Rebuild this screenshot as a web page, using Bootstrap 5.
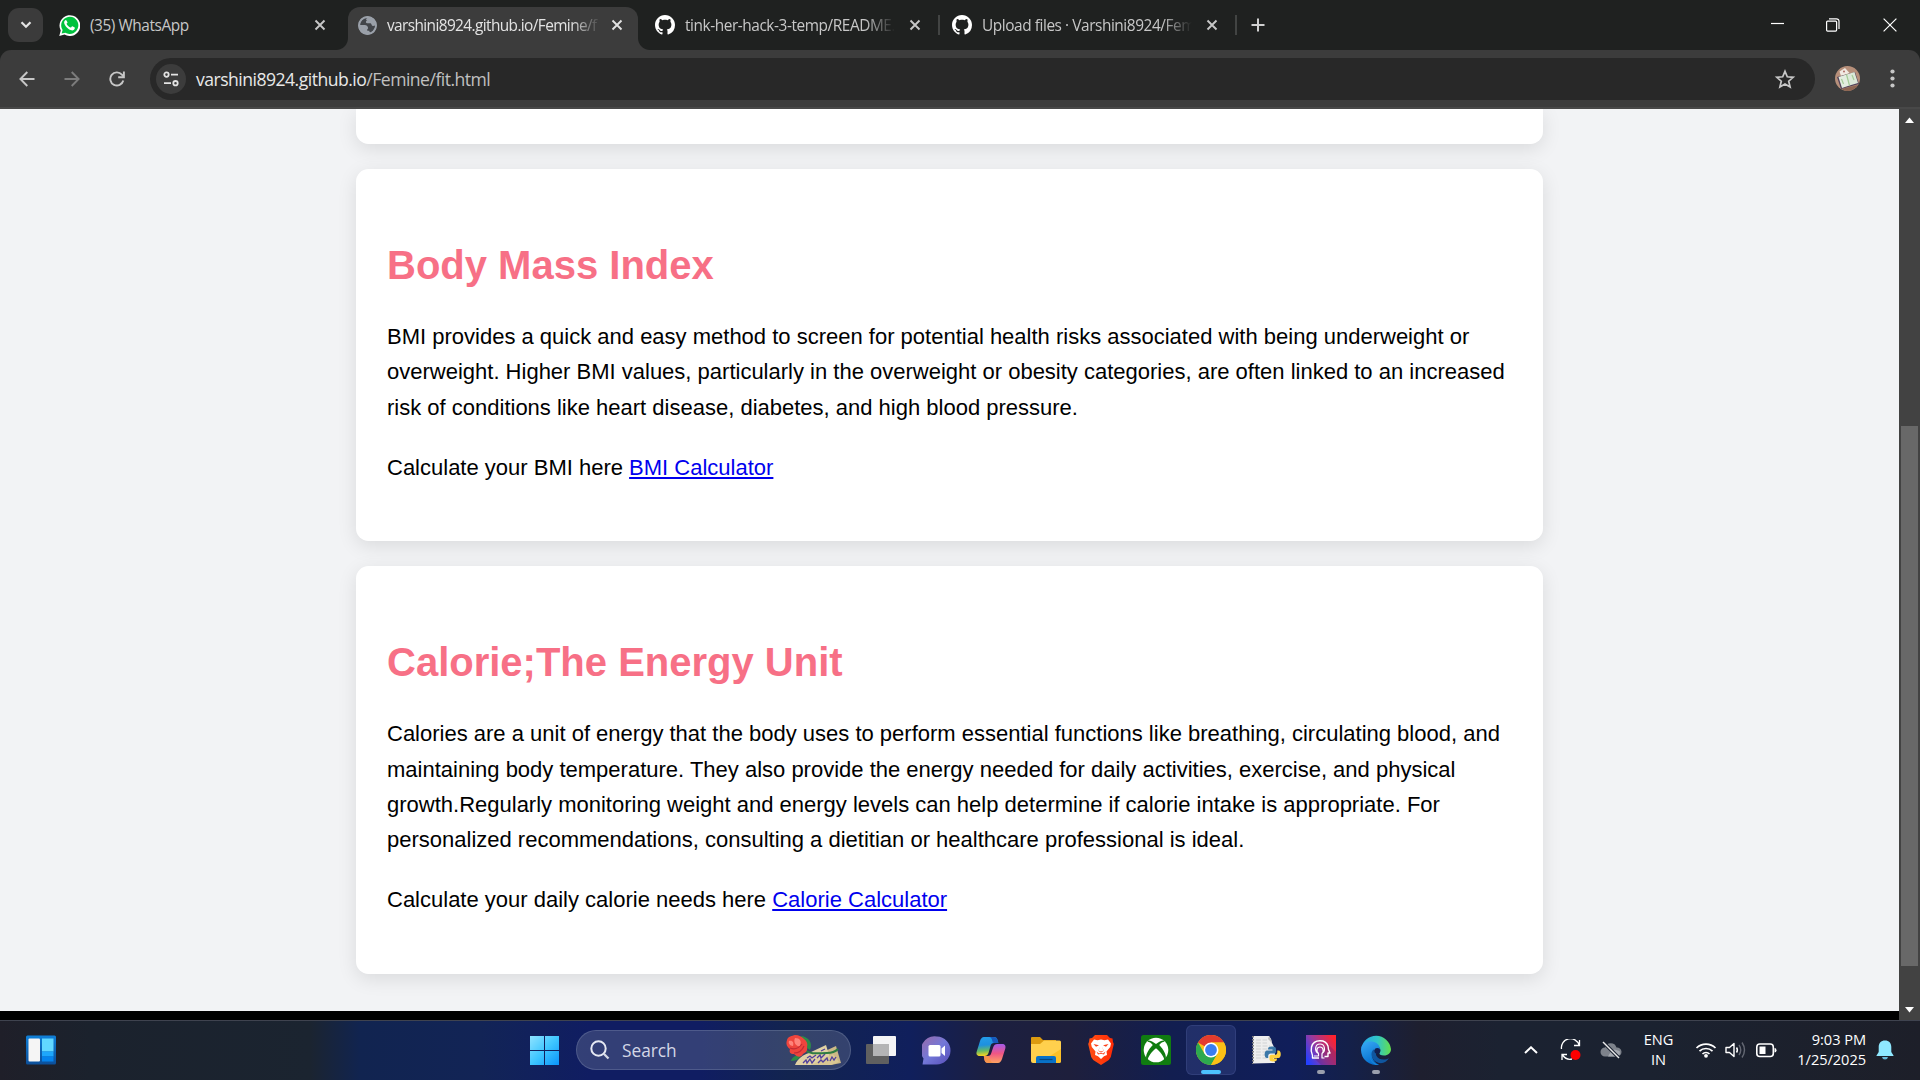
<!DOCTYPE html>
<html lang="en">
<head>
<meta charset="utf-8">
<meta name="viewport" content="width=device-width, initial-scale=1">
<title>varshini8924.github.io/Femine/fit.html</title>
<link href="https://cdn.jsdelivr.net/npm/bootstrap@5.3.0/dist/css/bootstrap.min.css" rel="stylesheet">
<style>
  html, body { height: 1080px; overflow: hidden; }
  body { font-family: "Open Sans", "Noto Sans", sans-serif; background: #000; color: #000; }
  svg { display: block; flex: none; }
  .screen { width: 1920px; height: 1080px; }

  /* tab strip */
  .browser-top { background: #1f2120; }
  .tabstrip { height: 50px; color: #c7c7c7; font-size: 15.4px; }
  .tabsearch { width: 35px; height: 34px; margin: 8px 4px 8px 8px; border-radius: 11px; background: #3b3b3b; }
  .tab { height: 43px; margin-top: 7px; padding: 0 11px 7px 10px; }
  .tab-a { width: 294px; padding-left: 12px; margin-right: 7px; }
  .tab-on { width: 290px; background: #3c3c3c; color: #e3e3e3; border-radius: 12px 12px 0 0; position: relative; }
  .tab-on::before, .tab-on::after { content: ""; position: absolute; bottom: 0; width: 12px; height: 12px; }
  .tab-on::before { left: -12px; background: radial-gradient(circle at 0 0, transparent 11.5px, #3c3c3c 12.5px); }
  .tab-on::after { right: -12px; background: radial-gradient(circle at 100% 0, transparent 11.5px, #3c3c3c 12.5px); }
  .tab-title { flex: 1 1 0; min-width: 0; white-space: nowrap; margin: 1px 10px 0; letter-spacing: -.43px; line-height: 22px; }
  .fade-end { -webkit-mask-image: linear-gradient(90deg, #000 calc(100% - 30px), transparent); mask-image: linear-gradient(90deg, #000 calc(100% - 30px), transparent); }
  .tab-on .tab-title { letter-spacing: -.6px; }
  .tab-sep { width: 2px; height: 20px; background: #424443; }
  .tab-c { width: 285px; margin-left: 17px; padding-left: 0; padding-right: 0; }
  .tab-d { width: 285px; margin-left: 12px; margin-right: 14px; padding-left: 0; padding-right: 0; }
  .tab-c svg + .ms-3, .tab-d svg + .ms-3 { padding-left: 1px; }
  .winctl { width: 57px; }

  /* toolbar */
  .toolbar { height: 59px; background: #3c3c3c; border-bottom: 2px solid #484848; border-radius: 11px 11px 0 0; }
  .navbtn { width: 45px; }
  .omnibox { width: 1665px; height: 42px; border-radius: 21px; background: #282828; color: #e8e8e8; font-size: 17.6px; padding-left: 6px; margin-left: 11px; }
  .siteinfo { width: 30px; height: 30px; border-radius: 50%; background: #3c3c3c; }
  .url { letter-spacing: -.52px; margin-left: 10px; line-height: 24px; }
  .url-path { color: #c0c0c0; }

  /* web page */
  .viewport-row { height: 911px; }
  .webpage { width: 1899px; height: 902px; background: #f2f3f5; overflow: hidden; font-family: "Liberation Sans", Arial, sans-serif; }
  .panel { width: 1187px; margin: 0 auto 25px; padding: 31px; background: #fff; border-radius: 12.5px; box-shadow: 0 5px 19px rgba(0,0,0,.1); }
  .panel-cut { height: 35px; border-radius: 0 0 12.5px 12.5px; padding: 0; }
  .panel h2 { font-size: 40px; line-height: 64px; font-weight: 700; color: #f77086; margin: 33.2px 0 22px; }
  .panel p { font-size: 22px; line-height: 35.2px; margin: 0 0 25px; white-space: nowrap; }
  .panel p:last-child { margin-bottom: 25.300px; }
  .panel a { color: #00e; text-decoration: underline; }
  .scroller { width: 21px; background: #424242; padding: 7px 2px 6px; }
  .scroll-thumb { width: 17px; height: 540px; background: #686868; margin-top: 301px; }

  /* taskbar */
  .taskbar { height: 60px; border-top: 1px solid #3f434f; color: #fff; padding-bottom: 1px;
    background: linear-gradient(90deg, #1f1f29 0, #1b222d 90px, #1b2430 310px, #112450 360px, #122456 480px, #101d62 590px, #101d62 700px, #12244f 790px, #101f5c 910px, #1c1f40 990px, #1e1f3c 1070px, #121e50 1170px, #101e5a 1290px, #142049 1350px, #1e1f2f 1420px, #1b2231 1500px, #1b2230 1650px, #1d1f29 1920px); }
  .tile { width: 50px; height: 50px; border-radius: 6px; margin-right: 5px; position: relative; }
  .tile-on { background: rgba(110,130,210,.18); border: 1px solid rgba(150,165,230,.13); }
  .run-mark { position: absolute; bottom: 1px; left: 50%; transform: translateX(-50%); width: 8px; height: 4px; border-radius: 2px; background: #9a9fad; }
  .tile-on .run-mark { width: 20px; background: #4cc2ff; bottom: 0; }
  .tile-widgets { margin: 0 453px 0 16px; }
  .searchbox { width: 275px; height: 40px; border-radius: 20px; background: rgba(125,135,160,.33); border: 1px solid rgba(160,170,205,.25); font-size: 17.3px; color: #d3d7e6; margin: 0 5px 0 2px; }
  .searchbox span { padding-top: 2px; }
  .tray { font-size: 14.6px; line-height: 20px; }
  .clock, .lang { padding-bottom: 2px; letter-spacing: -.05px; }
</style>
<script src="https://cdn.jsdelivr.net/npm/bootstrap@5.3.0/dist/js/bootstrap.bundle.min.js"></script>
</head>
<body>
<svg width="0" height="0" class="position-absolute">
  <defs>
    <symbol id="x" viewBox="0 0 12 12"><path d="M1.500 1.500l9 9M10.500 1.500l-9 9" stroke="currentColor" stroke-width="1.900" fill="none"/></symbol>
    <symbol id="gh" viewBox="0 0 16 16"><path fill="#fff" d="M8 0C3.58 0 0 3.58 0 8c0 3.54 2.29 6.53 5.47 7.59.4.07.55-.17.55-.38 0-.19-.01-.82-.01-1.49-2.01.37-2.53-.49-2.69-.94-.09-.23-.48-.94-.82-1.13-.28-.15-.68-.52-.01-.53.63-.01 1.08.58 1.23.82.72 1.21 1.87.87 2.33.66.07-.52.28-.87.51-1.07-1.78-.2-3.64-.89-3.64-3.95 0-.87.31-1.59.82-2.15-.08-.2-.36-1.02.08-2.12 0 0 .67-.21 2.2.82.64-.18 1.32-.27 2-.27s1.36.09 2 .27c1.53-1.04 2.2-.82 2.2-.82.44 1.1.16 1.92.08 2.12.51.56.82 1.27.82 2.15 0 3.07-1.87 3.75-3.65 3.95.29.25.54.73.54 1.48 0 1.07-.01 1.93-.01 2.2 0 .21.15.46.55.38A8.01 8.01 0 0 0 16 8c0-4.42-3.58-8-8-8z"/></symbol>
  </defs>
</svg>

<div class="screen d-flex flex-column">

  <header class="browser-top">
  <!-- tab strip -->
  <div class="tabstrip d-flex align-items-start">
    <div class="tabsearch d-flex align-items-center justify-content-center">
      <svg width="12" height="8" viewBox="0 0 12 8"><path d="M1.500 1.200L6 5.800l4.500-4.600" fill="none" stroke="#e3e3e3" stroke-width="2.200"/></svg>
    </div>
    <div class="tab tab-a d-flex align-items-center">
      <svg width="21" height="21" viewBox="0 0 24 24"><path fill="#fff" d="M.3 24l1.700-6.200A11.900 11.900 0 1 1 6.300 22.300z"/><path fill="#00c23e" d="M3 21.200l1.100-4A9.800 9.800 0 1 1 7.200 20.200z"/><path fill="#fff" d="M8.700 6.500c-.4-.8-.9-.8-1.400-.6C5.500 7 5.600 9 6.500 10.800c1.600 3.200 4.200 5.600 7.500 6.700 1.900.5 3.900-.4 4.100-2.600 0-.6-.2-.7-.6-.9l-2.200-1.100c-.9-.3-1.200 1.500-2 1.500-2-.7-3.900-2.500-4.700-4.300 0-.6 1.300-1.100 1.100-1.900z"/></svg>
      <div class="tab-title">(35) WhatsApp</div>
      <svg width="12" height="12"><use href="#x"/></svg>
      <div class="ms-1"></div>
    </div>
    <div class="tab tab-on d-flex align-items-center">
      <svg width="19" height="19" viewBox="0 0 19 19"><circle cx="9.500" cy="9.500" r="9.200" fill="#9aa0a9"/><path d="M10.500 1.800c-3 .2-2.800 2.600-1.200 2.800-1.900.4-1.800 2.400-.3 2.700h3.500c1.500.6.600 2.400 2.500 2.600l2.300-.4c0 3-2.200 6-4.700 7-.8-.2-1.300-.9-1.200-1.800H9.500c-.7-.8-.2-1.800.6-2.300C10.200 10.500 8.600 9 6.800 9H2.200C2 5 5.500 1.500 10.500 1.800z" fill="#42454a"/><circle cx="9.500" cy="9.500" r="8.500" fill="none" stroke="#9aa0a9" stroke-width="1.800"/></svg>
      <div class="tab-title fade-end">varshini8924.github.io/Femine/f</div>
      <svg width="12" height="12"><use href="#x"/></svg>
      <div class="ms-1"></div>
    </div>
    <div class="tab tab-c d-flex align-items-center">
      <svg width="20" height="20"><use href="#gh"/></svg>
      <div class="tab-title fade-end">tink-her-hack-3-temp/README.</div>
      <svg class="ms-1" width="12" height="12"><use href="#x"/></svg>
      <div class="ms-3"></div>
      <div class="tab-sep"></div>
    </div>
    <div class="tab tab-d d-flex align-items-center">
      <svg width="20" height="20"><use href="#gh"/></svg>
      <div class="tab-title fade-end">Upload files · Varshini8924/Fem</div>
      <svg class="ms-1" width="12" height="12"><use href="#x"/></svg>
      <div class="ms-3"></div>
      <div class="tab-sep"></div>
    </div>
    <div class="d-flex align-items-center align-self-stretch">
      <svg width="14" height="14" viewBox="0 0 14 14"><path d="M7 .5v13M.5 7h13" stroke="#d0d0d0" stroke-width="2"/></svg>
    </div>
    <div class="ms-auto d-flex align-self-stretch align-items-center">
      <div class="winctl d-flex justify-content-center"><svg width="14" height="14"><path d="M0 5.500h13" stroke="#fff" stroke-width="1.200"/></svg></div>
      <div class="winctl d-flex justify-content-center pe-1"><svg width="14" height="14"><rect x=".6" y="3.100" width="10" height="10" rx="1" fill="none" stroke="#fff" stroke-width="1.200"/><path d="M3 .8h7.500a2.500 2.500 0 0 1 2.500 2.500V11" fill="none" stroke="#fff" stroke-width="1.200"/></svg></div>
      <div class="winctl d-flex justify-content-center pe-1"><svg width="14" height="14"><path d="M.6.6l12.800 12.800M13.400.6L.6 13.400" stroke="#fff" stroke-width="1.200"/></svg></div>
    </div>
  </div>

  <!-- toolbar -->
  <div class="toolbar d-flex align-items-center ps-1">
    <div class="navbtn d-flex justify-content-center"><svg width="16" height="16"><path d="M15.500 8H1.500M8.300 1L1.400 8l6.900 7" fill="none" stroke="#c7c7c7" stroke-width="1.900"/></svg></div>
    <div class="navbtn d-flex justify-content-center"><svg width="16" height="16"><path d="M.5 8h14M7.700 1l6.900 7-6.900 7" fill="none" stroke="#7c7c7c" stroke-width="1.900"/></svg></div>
    <div class="navbtn d-flex justify-content-center"><svg width="16" height="16"><path d="M14.300 9.600A6.600 6.600 0 1 1 12.900 3.600L14.600 5.500" fill="none" stroke="#c7c7c7" stroke-width="1.900"/><path d="M14.900.5v5.700H9.200" fill="none" stroke="#c7c7c7" stroke-width="1.900"/></svg></div>
    <div class="omnibox d-flex align-items-center me-auto">
      <div class="siteinfo d-flex align-items-center justify-content-center"><svg width="16" height="16" viewBox="0 0 16 16" fill="none" stroke="#e3e3e3" stroke-width="1.800"><circle cx="3.500" cy="3.600" r="2.200"/><path d="M8 3.600h7M1 12.200h7"/><circle cx="12.500" cy="12.200" r="2.200"/></svg></div>
      <div class="url">varshini8924.github.io<span class="url-path">/Femine/fit.html</span></div>
      <svg class="ms-auto me-3" width="28" height="20" viewBox="0 0 28 20"><path d="M14 1.800l2.300 5.500 5.900.5-4.500 3.900 1.400 5.800-5.100-3.100-5.100 3.100 1.400-5.800-4.500-3.900 5.900-.5z" fill="none" stroke="#c7c7c7" stroke-width="1.700" transform="translate(0 .5)"/></svg>
    </div>
    <svg width="25" height="25" viewBox="0 0 25 25" style="margin-right:30px"><clipPath id="av"><circle cx="12.500" cy="12.500" r="12.500"/></clipPath><g clip-path="url(#av)"><path fill="#b68f7a" d="M0 0h25v25H0z"/><path fill="#8d6552" d="M6 23l17-4 2 4-10 4z"/><path fill="#f1e9e2" d="M4.500 5.500L10 2l4.500 5L6 10z"/><path fill="#514159" d="M2 11l18-5 4 12-18 5z"/><path fill="#e3eddf" d="M3.500 11l8-2.500 3 11L7 22z"/><path fill="#dde9d9" d="M11.500 8.500L19.500 6l3.500 11-8.500 2.500z"/><path d="M11.500 8.500l3 11M6.500 13l2 5M17 9l2 5" stroke="#a5cc98" stroke-width="1.200"/><circle cx="9" cy="5.500" r=".9" fill="#a8605a"/></g></svg>
    <div class="pe-4 me-1"><svg width="5" height="22" viewBox="0 0 5 22" fill="#c7c7c7" style="margin-right:-3px"><circle cx="2.500" cy="3.500" r="2.100"/><circle cx="2.500" cy="10.500" r="2.100"/><circle cx="2.500" cy="17.500" r="2.100"/></svg></div>
  </div>
  </header>

  <!-- page viewport -->
  <div class="viewport-row d-flex">
    <main class="webpage">
      <section class="panel panel-cut"></section>
      <section class="panel">
        <h2>Body Mass Index</h2>
        <p>BMI provides a quick and easy method to screen for potential health risks associated with being underweight or<br>overweight. Higher BMI values, particularly in the overweight or obesity categories, are often linked to an increased<br>risk of conditions like heart disease, diabetes, and high blood pressure.</p>
        <p>Calculate your BMI here <a href="#">BMI Calculator</a></p>
      </section>
      <section class="panel">
        <h2>Calorie;The Energy Unit</h2>
        <p>Calories are a unit of energy that the body uses to perform essential functions like breathing, circulating blood, and<br>maintaining body temperature. They also provide the energy needed for daily activities, exercise, and physical<br>growth.Regularly monitoring weight and energy levels can help determine if calorie intake is appropriate. For<br>personalized recommendations, consulting a dietitian or healthcare professional is ideal.</p>
        <p>Calculate your daily calorie needs here <a href="#">Calorie Calculator</a></p>
      </section>
    </main>
    <div class="scroller d-flex flex-column align-items-center">
      <svg width="9" height="9"><path d="M4.500 1.500L9 7H0z" fill="#fff"/></svg>
      <div class="scroll-thumb"></div>
      <svg class="mt-auto" width="9" height="9"><path d="M4.500 7.500L9 2H0z" fill="#fff"/></svg>
    </div>
  </div>

  <!-- taskbar -->
  <div class="taskbar d-flex align-items-center">
    <div class="tile tile-widgets d-flex align-items-center justify-content-center">
      <svg width="30" height="30" viewBox="0 0 30 30"><defs><linearGradient id="wg" x2="0" y2="1"><stop stop-color="#0f7fd8"/><stop offset="1" stop-color="#0c4f9a"/></linearGradient></defs><rect width="30" height="29" y=".5" rx="1.500" fill="url(#wg)"/><rect x="2.500" y="3.500" width="11.500" height="23" rx="1" fill="#f5f5f5"/><path fill="#62d8ff" d="M16 3.500h11.500v13H16z"/><path fill="#1ea7fb" d="M16 16.500h11.500v5H16z"/><path fill="#0583ec" d="M16 21.500h11.500v5H16z"/></svg>
    </div>
    <div class="tile d-flex align-items-center justify-content-center">
      <svg width="29" height="29" viewBox="0 0 29 29"><defs><linearGradient id="st" gradientUnits="userSpaceOnUse" x1="0" y1="0" x2="29" y2="29"><stop stop-color="#8fe3ff"/><stop offset=".5" stop-color="#3fc6ff"/><stop offset="1" stop-color="#0a94fb"/></linearGradient></defs><path fill="url(#st)" d="M0 0h14v14H0zM15 0h14v14H15zM0 15h14v14H0zM15 15h14v14H15z"/></svg>
    </div>
    <div class="searchbox d-flex align-items-center ps-3 pe-2">
      <svg style="margin-left:-3px" width="20" height="20"><circle cx="8.500" cy="8.500" r="7.200" fill="none" stroke="#e6e9f3" stroke-width="2"/><path d="M13.800 13.800l4.700 4.700" stroke="#d5d9e6" stroke-width="2.300"/></svg>
      <span class="ms-2 ps-1">Search</span>
      <svg class="ms-auto" width="57" height="32" viewBox="0 0 57 32"><path d="M38 18l13-6 5 17-10 2z" fill="#cdb987"/><path d="M10 31c3-7 8-10 14-12l17-8 4 13-4 7z" fill="#e0d1a4"/><path d="M26 31l22-11 6 8-8 3z" fill="#d9c793"/><path d="M18 29l3-3 1 3 3-4 2 4 3-4M32 24l3-3 1 3 4-4M33 29l3-3 2 2 4-4 1 3M22 24l3-2 2 2 4-3M36 17l4-2M45 27l2-4 2 3 2-3" fill="none" stroke="#51409d" stroke-width="1.300"/><path d="M20 16c6 5 14 3 22 3 5 0 8-1 11-4" fill="none" stroke="#2f7d42" stroke-width="2"/><path d="M16 2c8 1 12 7 9 14l-6-4zM6 27c1-4 5-6 10-6-1 3-4 6-10 6z" fill="#2c8c48"/><path d="M2 6c1-4 5-4 8-5 4 0 7 2 9 4 3 2 4 5 3 8 1 4-2 6-4 7-2 4-6 3-9 0-4 0-5-2-4-5-4-3-4-6-3-9z" fill="#ee453d"/><path d="M4 7c4-1 5 2 4 5-3 0-5-3-4-5zM10 4c5 0 7 3 5 8-4 1-7-4-5-8z" fill="#ff837a"/><path d="M5 14c5 2 9 0 12-4M9 19c4 0 8-2 10-7" fill="none" stroke="#c22a33" stroke-width="1.200"/></svg>
    </div>
    <div class="tile d-flex align-items-center justify-content-center">
      <svg width="30" height="28" viewBox="0 0 30 28"><rect y="8" width="23" height="20" rx="1" fill="#606060"/><rect x="7" width="23" height="20" rx="1" fill="#f4f4f5"/><path d="M7 8h16v12H7z" fill="#b4b4b5"/></svg>
    </div>
    <div class="tile d-flex align-items-center justify-content-center">
      <svg width="29" height="29" viewBox="0 0 29 29"><defs><linearGradient id="mt" x1="0" y1="0" x2="1" y2="1"><stop stop-color="#9a6aa8"/><stop offset=".5" stop-color="#7378d8"/><stop offset="1" stop-color="#574cb8"/></linearGradient></defs><path d="M15 .5a14 14 0 1 1-1 28H.5l1-6A14 14 0 0 1 15 .5z" fill="url(#mt)"/><rect x="6.500" y="9" width="12" height="11.500" rx="1.500" fill="#fff"/><path d="M19.500 12.500l3.500-3v10.500l-3.500-3z" fill="#fff"/></svg>
    </div>
    <div class="tile d-flex align-items-center justify-content-center">
      <svg width="30" height="28" viewBox="0 0 30 28"><defs><linearGradient id="c1" x2=".1" y2="1"><stop stop-color="#249eea"/><stop offset=".45" stop-color="#1e90df"/><stop offset=".75" stop-color="#66b965"/><stop offset="1" stop-color="#f3d423"/></linearGradient><linearGradient id="c2" x2="0" y2="1"><stop stop-color="#a45bea"/><stop offset=".5" stop-color="#ef5685"/><stop offset="1" stop-color="#ffa463"/></linearGradient></defs><path d="M8 1h10c2 0 3 1 3.500 3L22 7h-4c-2 0-3 1-3.500 3l-2 7c-.7 2-2 3-4 3H4c-3 0-4-2-3.400-4L4 5c.6-2 2-4 4-4z" fill="url(#c1)"/><path d="M17 1c3 0 4 1 4.600 3l1 3h-4c-2 0-2-1-2.500-3-.6-2-1.500-3-3-3z" fill="#1759bd"/><path d="M22 27H12c-2 0-3-1-3.500-3L7.800 20h4c2 0 3-1 3.500-3l2-6c.7-2 2-3 4-3H26c3 0 4 2 3.300 4.500L26 23c-.7 2-2 4-4 4z" fill="url(#c2)"/><path d="M13 27c-3 0-4-1-4.500-3L7.800 20h4c2 0 2 2 2.400 3.500.4 2 1.500 3.500 3.800 3.500z" fill="#f6934c"/></svg>
    </div>
    <div class="tile d-flex align-items-center justify-content-center">
      <svg width="30" height="26" viewBox="0 0 30 26"><path d="M0 1q0-1 1-1h8l3 3h13v6H0z" fill="#dc9b10"/><path d="M0 7h9l4-3.500h15.500Q30 3.500 30 5v19q0 2-2 2H2q-2 0-2-2z" fill="#ffd04d"/><path d="M30 12v12q0 2-2 2H8z" fill="#fcc027"/><path d="M5 26v-5q0-2 2-2h16q2 0 2 2v5z" fill="#0871c7"/><path d="M8.500 22.500h13" stroke="#07467e" stroke-width="1.200"/></svg>
    </div>
    <div class="tile d-flex align-items-center justify-content-center">
      <svg width="26" height="30" viewBox="0 0 26 30"><defs><linearGradient id="br"><stop stop-color="#ff4f14"/><stop offset="1" stop-color="#ff2a05"/></linearGradient></defs><path d="M7 0h12l3 3 2.500.5L25 7l.8 2-3 13-2 3-7.800 5-7.800-5-2-3L.2 9 1 7l.5-3.500L4 3z" fill="url(#br)"/><path d="M6 4.500l3.500.7L13 4.500l3.500.7 3.500-.7L23 8.500l-.8 3.500-3.700 4.500.5 3.500-3 1.300-3 2.700-3-2.700L7 20l.5-3.500L3.800 12 3 8.500z" fill="#fff"/><path d="M5.500 9l5.500 1.200-3 1.600zM20.500 9L15 10.200l3 1.600zM11.500 11.500L10.500 16l2.500 1.500 2.500-1.500-1-4.500.7 4.200L13 16.500l-2.200-.8zM8.500 16.500l2.500 2 2-.8 2 .8 2.500-2-1.500 3-3-.8-3 .8z" fill="#fb411c"/></svg>
    </div>
    <div class="tile d-flex align-items-center justify-content-center">
      <svg width="30" height="30" viewBox="0 0 30 30"><rect width="30" height="30" rx="2.500" fill="#107c10"/><circle cx="15" cy="15" r="12.300" fill="#fff"/><path d="M5.800 5.800C8 4.700 12 6.500 15 9c3-2.500 7-4.300 9.200-3.200L22.500 7c-1-.3-2.500.8-4.300 3 4.300 4.500 8 10.500 6.300 14.500l-1.200 1C23.500 22 19 16.500 15 13.300 11 16.500 6.500 22 6.700 25.500l-1.200-1c-1.700-4 2-10 6.300-14.500C10 7.800 8.500 6.700 7.500 7z" fill="#107c10"/></svg>
    </div>
    <div class="tile tile-on d-flex align-items-center justify-content-center">
      <svg width="30" height="30" viewBox="0 0 30 30"><circle cx="15" cy="15" r="15" fill="#fbc116"/><path d="M15 15L2 7.500A15 15 0 0 1 28 7.500H15z" fill="#e33b2e"/><path d="M2 7.500A15 15 0 0 0 15 30l6.500-11.250L15 15 8.500 18.750z" fill="#2da94f"/><path d="M28 7.500A15 15 0 0 1 15 30l6.500-11.250L15 7.500z" fill="#fbc116"/><circle cx="15" cy="15" r="7.500" fill="#fff"/><circle cx="15" cy="15" r="5.900" fill="#3a7df0"/></svg>
      <span class="run-mark"></span>
    </div>
    <div class="tile d-flex align-items-center justify-content-center">
      <svg width="29" height="28" viewBox="0 0 29 28"><path d="M1 0h16l2 3 1 4 2 4 1 8-1 4 1 4-22 .5z" fill="#eee"/><path d="M17 0l2 3 1 4-4-4z" fill="#bdbdbd"/><path d="M4 4h11M4 7h11M4 10h14M4 13h14M4 16h10M4 19h10M4 22h12" stroke="#cfd1d3" stroke-width="1.200" stroke-dasharray="5 1.500"/><path d="M1 0v28" stroke="#808080" stroke-width="2" stroke-dasharray="1.500 1.500"/><path d="M19.500 10.500c-3 0-3.500 1-3.500 3h4.500v1H15c-3 0-3.300 7.500 0 7.500h1.200v-2c0-1.500 1-2.500 2.500-2.500h3.500c1.200 0 1.800-1 1.800-2V13c0-2-1.500-2.500-4.500-2.500z" fill="#3b78a8"/><path d="M21.500 25.500c3 0 3.500-1 3.500-3h-4v-.5h5.500c3 0 3-7.500 0-7.500h-1.200v2c0 1.500-1 2.300-2.500 2.300h-3.500c-1.200 0-1.800 1-1.800 2V23c0 2 1.500 2.500 4 2.500z" fill="#fdd13f"/></svg>
    </div>
    <div class="tile d-flex align-items-center justify-content-center">
      <svg width="30" height="30" viewBox="0 0 30 30"><defs><linearGradient id="rd" x1="0" y1=".8" x2="1" y2=".2"><stop stop-color="#2440ff"/><stop offset=".45" stop-color="#963aa0"/><stop offset="1" stop-color="#ff222d"/></linearGradient></defs><path d="M0 0h30v30H0z" fill="url(#rd)"/><path d="M8 23l7 7h15V17l-8-8z" fill="#641a62" opacity=".3"/><g fill="none" stroke="#fff" stroke-linejoin="round"><path d="M13 23H6.500v-2.500C5 17.500 5 14 5.500 12 6.500 8 10 5.800 14 5.800c4.500 0 7 2.200 8 5.200l.5 3.500L24 18h-2v3.500h-3.500" stroke-width="1.400"/><path d="M8 21h4.500v-2.500C8 16 9 9 14 9s6 7 2 9.500V23h2.500M12.500 18.500c-2.500-2-2-6.500 1.500-6.500s4 4.500 2 6.500" stroke-width="1.200"/></g></svg>
      <span class="run-mark"></span>
    </div>
    <div class="tile d-flex align-items-center justify-content-center">
      <svg width="30" height="30" viewBox="0 0 30 30"><defs><linearGradient id="e1"><stop stop-color="#26a5ec"/><stop offset=".55" stop-color="#31c6c6"/><stop offset="1" stop-color="#64df4b"/></linearGradient><linearGradient id="e2" x2=".4" y2="1"><stop stop-color="#39aaf5"/><stop offset="1" stop-color="#0670cf"/></linearGradient></defs><path d="M.3 13.500A15 15 0 0 1 30 14c0 4-3 6.500-7 6.500-3.500 0-5-1-4.500-2.500 2-2.500.8-7-4-7.500C9 10 3 8 .3 13.500z" fill="url(#e1)"/><path d="M0 15c0-6.500 6-9 10.500-8.500 5 .5 8.500 3.500 8.500 8 0 1.500-.5 2.700-1 3.500-.5-3-4-4-6-1-2.500 5 1 10.500 6 12.700A15 15 0 0 1 0 15z" fill="url(#e2)"/><path d="M12.500 14.500c-4 3-2 12 5.500 13.500 4.500.8 8-1.500 10-5-3.500 2.500-10.500 2-12.500-2-.8-1.500-.6-3 .5-4.500z" fill="#10569f"/><path d="M10.500 16.500C7 22 11.500 29 18 29.700l-3 .3c-5-2-8-8-4.500-13.500z" fill="#1c86d8"/><circle cx="16.300" cy="15.800" r="2.900" fill="#122050"/></svg>
      <span class="run-mark"></span>
    </div>

    <!-- system tray -->
    <div class="tray ms-auto d-flex align-items-center">
      <svg width="14" height="8" style="margin-right:22px"><path d="M1 7l6-5.700L13 7" fill="none" stroke="#fff" stroke-width="2"/></svg>
      <svg width="22" height="22" viewBox="0 0 22 22" style="margin-right:18px"><path d="M1.500 10A9 9 0 0 1 19 6M19.500 1v5.500h-5.500M12 20c-4 1-7-.5-9.500-4M2 21v-5.500h5" fill="none" stroke="#fff" stroke-width="1.300"/><circle cx="15.500" cy="16" r="5" fill="#f00"/></svg>
      <svg width="22" height="18" viewBox="0 0 22 18" style="margin-right:22px"><path d="M5 15.500a4.500 4.500 0 0 1 0-9A6 6 0 0 1 16.500 6.500a4.500 4.500 0 0 1 1 9z" fill="#7d828b"/><path d="M8 15.500l3.500-6 3-1 5 1.500a4 4 0 0 1-2 5.500z" fill="#a5a9b0"/><path d="M3 1l16 16" stroke="#1b2230" stroke-width="3.500"/><path d="M3 1l16 16" stroke="#ebebeb" stroke-width="1.500"/></svg>
      <div class="text-center lang"><div>ENG</div><div>IN</div></div>
      <svg width="22" height="18" viewBox="0 0 22 18" style="margin-left:22px;margin-right:8px"><path d="M1.500 7a13.500 13.500 0 0 1 19 0M4.500 10.200a9.200 9.200 0 0 1 13 0M7.500 13a5 5 0 0 1 7 0" fill="none" stroke="#fff" stroke-width="1.700"/><circle cx="11" cy="14.800" r="1.900" fill="#fff"/></svg>
      <svg width="22" height="18" viewBox="0 0 22 18" style="margin-right:9px"><path d="M1 6.500h3.500L9 2.500v13l-4.500-4H1z" fill="none" stroke="#fff" stroke-width="1.400" stroke-linejoin="round"/><path d="M11.500 6.500q1.800 2.500 0 5" fill="none" stroke="#fff" stroke-width="1.500"/><path d="M14 4q3.500 5 0 10M17 1.500q5 7.500 0 15" fill="none" stroke="#646873" stroke-width="1.400"/></svg>
      <svg width="21" height="15" viewBox="0 0 21 15" style="margin-right:20px"><rect x=".8" y="1" width="16.500" height="12.500" rx="3" fill="none" stroke="#fff" stroke-width="1.600"/><path d="M3.500 3.500h6v7.500h-6z" fill="#fff"/><path d="M18.500 5q2 0 2 2.300t-2 2.300z" fill="#fff"/></svg>
      <div class="text-end clock"><div>9:03 PM</div><div>1/25/2025</div></div>
      <svg width="18" height="20" viewBox="0 0 18 20" style="margin-left:10px;margin-right:26px"><path d="M9 .5c4 0 6.300 2.700 6.300 6.500v5l2.200 3.500v.6H.5v-.6L2.700 12V7C2.700 3.200 5 .5 9 .5z" fill="#8fe8ff"/><path d="M6 17h6q-.5 2.500-3 2.500T6 17z" fill="#67b7d8"/></svg>
    </div>
  </div>
</div>
</body>
</html>
